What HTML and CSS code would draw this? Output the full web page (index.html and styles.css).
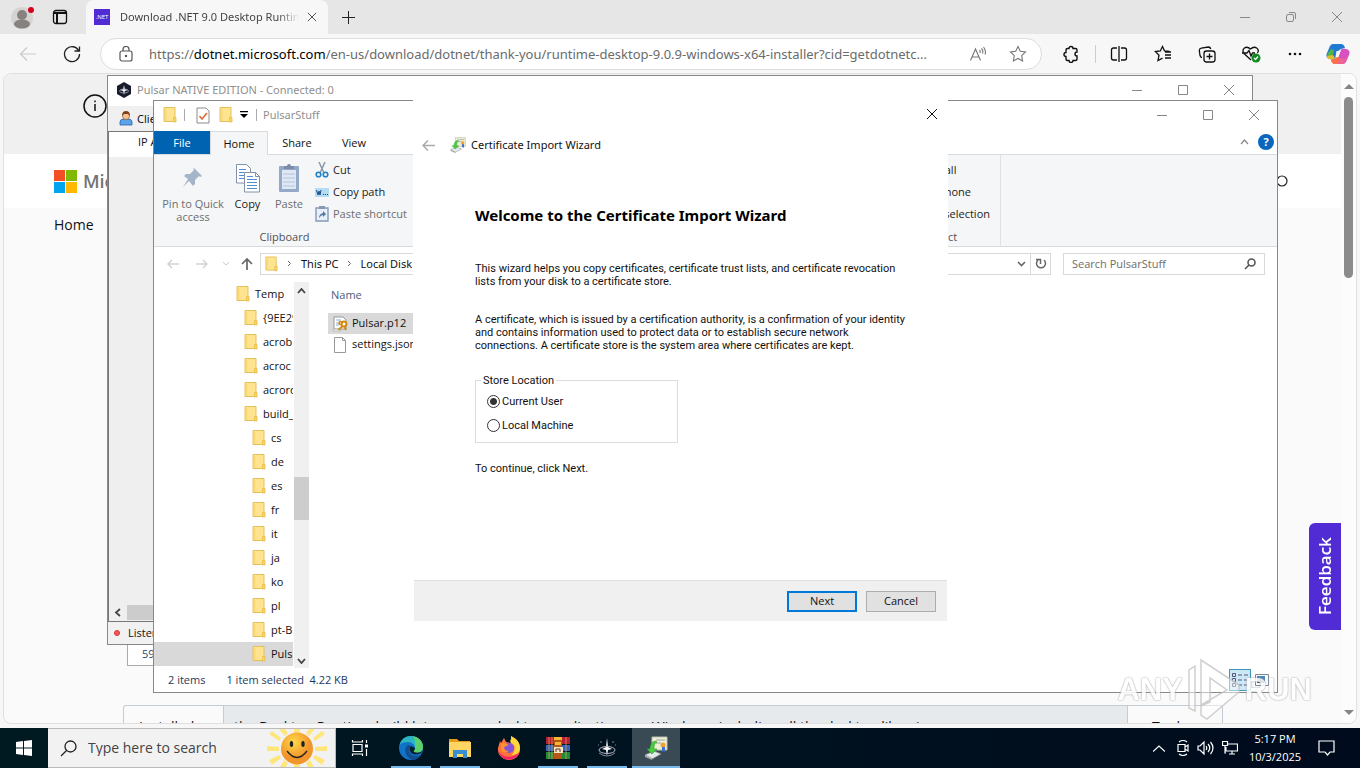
FILE: index.html
```
<!DOCTYPE html>
<html lang="en">
<head>
<meta charset="utf-8">
<title>Desktop</title>
<link rel="stylesheet" href="styles.css">
</head>
<body>
<svg class="defs" aria-hidden="true">
  <symbol id="folder" viewBox="0 0 16 16"><path d="M2 .5h11v14H2z" fill="#ffe490" stroke="#e3c05c"/><path d="M3 2h1.500v12H3z" fill="#fbd976"/><path d="M11.500 10.500h2.500v4.500h-2.500z" fill="#ffd95c" stroke="#e2bb4e" stroke-width=".8"/></symbol>
  <symbol id="min" viewBox="0 0 12 12"><path d="M1 6.500h10"/></symbol>
  <symbol id="max" viewBox="0 0 12 12"><path d="M1.500 1.500h9v9h-9z"/></symbol>
  <symbol id="close" viewBox="0 0 12 12"><path d="M1 1l10 10M11 1L1 11"/></symbol>
  <symbol id="cert" viewBox="0 0 24 24"><path d="M8 1h15v13H8z" fill="#efefd8" stroke="#b9bfae"/><path d="M12 4h9M12 7h5" stroke="#9aa59a"/><circle cx="19" cy="9" r="2.500" fill="#f0a030"/><path d="M18 11h3v5l-2-1-1 1z" fill="#3c6fc8"/><path d="M1 19l9-4 7 3-9 5z" fill="#e6e9eb" stroke="#8e9496" stroke-width=".8"/><path d="M1 19v2l7 3v-2z" fill="#a5abad"/><path d="M11 5c-3 1-5 4-5 8H3l5 5 5-5h-3c0-3 0-5 3-7z" fill="#4ccb45" stroke="#2a9b2a" stroke-width=".6"/></symbol>
  <symbol id="pulsar" viewBox="0 0 16 16"><path d="M8 0l7 4v8l-7 4-7-4V4z" fill="#171b2c"/><path d="M8 3l.8 4L12 8l-3.200 1L8 13l-.8-4L4 8l3.200-1z" fill="#fff"/><ellipse cx="8" cy="9" rx="4.500" ry="2" fill="none" stroke="#a3a7ba" stroke-width=".8"/></symbol>
</svg>

<main class="desktop">
  <section class="browser" aria-label="Browser">
    <header class="tabstrip">
      <button class="profile" aria-label="Profile"><svg width="26" height="26" viewBox="0 0 26 26"><circle cx="12" cy="14" r="11" fill="#d5d4d2"/><circle cx="12" cy="11" r="5" fill="#858280"/><ellipse cx="12" cy="20" rx="8" ry="4.500" fill="#858280"/><circle cx="21" cy="6" r="3" fill="#d6001c"/></svg></button>
      <button class="workspaces" aria-label="Tab actions"><svg width="16" height="16" viewBox="0 0 16 16" fill="none" stroke="#111" stroke-width="1.300"><rect x="1.500" y="1.500" width="13" height="13" rx="2.500"/><path d="M1.500 4h13M5 4v10.500" stroke-width="2"/></svg></button>
      <div class="tab">
        <span class="favicon">.NET</span>
        <span class="tab-title">Download .NET 9.0 Desktop Runtime</span>
        <button class="tab-close" aria-label="Close tab"><svg class="line"><use href="#close"/></svg></button>
      </div>
      <button class="new-tab" aria-label="New tab"><svg width="15" height="15" viewBox="0 0 15 15" stroke="#222"><path d="M7.500 1v13M1 7.500h13"/></svg></button>
      <div class="win-buttons browser-buttons">
        <button aria-label="Minimize"><svg class="line"><use href="#min"/></svg></button>
        <button aria-label="Restore"><svg class="line" viewBox="0 0 12 12"><rect x="1.500" y="3.500" width="7" height="7" rx="1.500"/><path d="M4 1.500h5q1.500 0 1.500 1.500v5"/></svg></button>
        <button aria-label="Close"><svg class="line"><use href="#close"/></svg></button>
      </div>
    </header>
    <nav class="toolbar">
      <button class="t-back" aria-label="Back"><svg width="18" height="16" viewBox="0 0 18 16" fill="none" stroke="#cacaca" stroke-width="1.200"><path d="M17 8H2M8 1.500L1.500 8 8 14.500"/></svg></button>
      <button class="t-reload" aria-label="Reload"><svg width="18" height="18" viewBox="0 0 18 18" fill="none" stroke="#222" stroke-width="1.300"><path d="M15.800 6A7.500 7.500 0 1 0 16.500 9M16.500 1.500V6h-5"/></svg></button>
      <div class="address" role="textbox" aria-label="Address">
        <svg width="14" height="16" viewBox="0 0 14 16" fill="none" stroke="#555" stroke-width="1.200"><rect x="1" y="5" width="12" height="10" rx="2"/><path d="M4 5V3.500a3 3 0 0 1 6 0V5"/><circle cx="7" cy="10" r=".6" fill="#555"/></svg>
        <span class="url">https://<b>dotnet.microsoft.com</b>/en-us/download/dotnet/thank-you/runtime-desktop-9.0.9-windows-x64-installer?cid=getdotnetc...</span>
        <button aria-label="Read aloud"><svg width="18" height="16" viewBox="0 0 18 16" fill="none" stroke="#777" stroke-width="1.100"><path d="M1.500 14.500L6.500 3l5 11.500M3 11h7M10.500 4q1 1 .5 3M12.500 2.500q2 2 1 5M14.500 1q3 3.500 1.500 7.500"/></svg></button>
        <button aria-label="Favorite"><svg width="18" height="18" viewBox="0 0 18 18" fill="none" stroke="#777" stroke-width="1.100"><path d="M9 1.500l2.300 4.800 5.200.7-3.800 3.700.9 5.200L9 13.400l-4.600 2.500.9-5.200L1.500 7l5.200-.7z"/></svg></button>
      </div>
      <div class="tools">
        <button aria-label="Extensions"><svg width="18" height="18" viewBox="0 0 18 18" fill="none" stroke="#111" stroke-width="1.400"><path d="M5.500 3.500H7a2 2 0 1 1 4 0h2.500q1.500 0 1.500 1.500v2a2 2 0 1 0 0 4v3q0 1.500-1.500 1.500H11a2 2 0 0 1-4 0H5.500Q4 15.500 4 14v-2.500a2 2 0 1 1 0-4V5q0-1.500 1.500-1.500z"/></svg></button>
        <i class="tool-sep"></i>
        <button aria-label="Split screen"><svg width="18" height="18" viewBox="0 0 18 18" fill="none" stroke="#111" stroke-width="1.300"><path d="M7 3H3.500q-2 0-2 2v8q0 2 2 2H7M11 3h3.500q2 0 2 2v8q0 2-2 2H11M9 1v16"/></svg></button>
        <button aria-label="Favorites"><svg width="18" height="18" viewBox="0 0 18 18" fill="none" stroke="#111" stroke-width="1.300"><path d="M15.500 6.500l-5-.7L8.500 1.500 6.300 6l-5 .5L5 10.200 4 15.500l4.500-2.300M11 7h6M11 10h6M11 13h6"/></svg></button>
        <button aria-label="Collections"><svg width="18" height="18" viewBox="0 0 18 18" fill="none" stroke="#111" stroke-width="1.300"><rect x="6" y="6" width="11" height="11" rx="2.500"/><path d="M11.500 8.500v6M8.500 11.500h6M4 12.500q-1.500 0-2-2l-.7-5q0-2 2-2.300l7-1.200q2 0 2.500 2"/></svg></button>
        <button aria-label="Browser essentials"><svg width="20" height="18" viewBox="0 0 20 18" fill="none" stroke="#111" stroke-width="1.300"><path d="M10 15L3 8.500C0 4 5 0 9.500 4 14 0 19 4 16.500 8M1 8h5l2-2.500L10 11l1.500-3H14"/><circle cx="15" cy="13" r="4.500" fill="#128a22" stroke="none"/><path d="M13 13l1.500 1.500L17 11.500" stroke="#fff"/></svg></button>
        <button class="more" aria-label="More"><svg width="14" height="4" viewBox="0 0 14 4" fill="#111"><circle cx="2" cy="2" r="1.300"/><circle cx="7" cy="2" r="1.300"/><circle cx="12" cy="2" r="1.300"/></svg></button>
        <button aria-label="Copilot"><svg width="24" height="22" viewBox="0 0 24 22"><path d="M7 1h8q3 0 4 4l-4 1-3 2-3 8q-1 1-5 0-5-1-3-6l3-7q1-2 3-2z" fill="#2079d5"/><path d="M2 10l3-4 3 1-2 8-3 1q-3-2-1-6z" fill="#50b64a"/><path d="M1 13l6-1 2 3-2 2-4-1q-2-1-2-3z" fill="#e5ba2d"/><path d="M17 21H9q-3 0-4-4l4-1 3-2 3-7q1-2 5-1 5 1 3 6l-3 7q-1 2-3 2z" fill="#d851c0"/><path d="M5 17l4-1 3-3 2 3-2 5H9q-3 0-4-4z" fill="#ff7046"/><path d="M13 15l6 1 2-3-2 6-3 2h-4z" fill="#f06493"/><path d="M10.500 8h4l-2 6h-3z" fill="#f7f7f7"/></svg></button>
      </div>
    </nav>
    <div class="page">
      <div class="page-body">
        <div class="banner"><svg width="24" height="24" viewBox="0 0 24 24" fill="none" stroke="#111" stroke-width="1.500"><circle cx="12" cy="12" r="11"/><path d="M12 10v7M12 6.500v1.800"/></svg></div>
        <div class="masthead">
          <a href="#" class="ms"><svg width="23" height="23" viewBox="0 0 23 23"><path d="M0 0h11v11H0z" fill="#f25022"/><path d="M12 0h11v11H12z" fill="#7fba00"/><path d="M0 12h11v11H0z" fill="#00a4ef"/><path d="M12 12h11v11H12z" fill="#ffb900"/></svg>Microsoft</a>
          <button class="site-search" aria-label="Search site"><svg width="14" height="14" viewBox="0 0 14 14" fill="none" stroke="#222" stroke-width="1.200"><circle cx="8" cy="7" r="5"/></svg></button>
        </div>
        <a href="#" class="home-link">Home</a>
        <div class="page-fill"></div>
        <div class="page-box">59</div>
        <div class="page-gap"></div>
        <div class="page-cells"><span>Installed</span><span>the Desktop Runtime build lets you run desktop applications on Windows, including all the desktop libraries</span><span>Tools</span></div>
      </div>
      <div class="page-scroll"><i class="arrow-up"></i><i class="thumb"></i><i class="arrow-down"></i></div>
      <button class="feedback">Feedback</button>
    </div>
  </section>

  <section class="window pulsar" aria-label="Pulsar">
    <header class="titlebar"><svg width="16" height="16"><use href="#pulsar"/></svg><span class="title">Pulsar NATIVE EDITION - Connected: 0</span>
      <div class="win-buttons"><button aria-label="Minimize"><svg class="line"><use href="#min"/></svg></button><button aria-label="Maximize"><svg class="line"><use href="#max"/></svg></button><button aria-label="Close"><svg class="line"><use href="#close"/></svg></button></div>
    </header>
    <div class="menu"><svg width="14" height="15" viewBox="0 0 14 15"><path d="M1 11q0-3 4-3h4q4 0 4 3v3H1z" fill="#5da3ea" stroke="#2464a8" stroke-width=".8"/><circle cx="7" cy="5" r="3.500" fill="#f6c294" stroke="#8b4b20" stroke-width=".6"/><path d="M3 5q0-5 4-5t4 5l-2-2H5z" fill="#81401a"/></svg><button>Clients</button></div>
    <div class="list"><div class="list-head">IP Address</div><div class="list-fill"></div><div class="h-scroll"><svg width="7" height="9" viewBox="0 0 7 9" fill="none" stroke="#444" stroke-width="1.800"><path d="M6 1L2 4.500 6 8"/></svg><i></i></div></div>
    <footer class="pulsar-status"><i></i>Listening</footer>
  </section>

  <section class="window explorer" aria-label="PulsarStuff">
    <header class="titlebar">
      <svg class="q1" width="16" height="18"><use href="#folder"/></svg><i class="q-sep"></i>
      <svg class="q2" width="14" height="17" viewBox="0 0 14 17" fill="#fff" stroke="#8c8c8c"><path d="M1 1h9l3 3v12H1z"/><path d="M3.500 9l2.500 3 5-6" fill="none" stroke="#e06a35" stroke-width="1.600"/></svg>
      <svg class="q3" width="16" height="18"><use href="#folder"/></svg>
      <svg class="q4" width="8" height="8" viewBox="0 0 8 8"><path d="M0 0h8v1.200H0zM0 3h8L4 7z"/></svg><i class="q-sep"></i>
      <span class="title">PulsarStuff</span>
      <div class="win-buttons"><button aria-label="Minimize"><svg class="line"><use href="#min"/></svg></button><button aria-label="Maximize"><svg class="line"><use href="#max"/></svg></button><button aria-label="Close"><svg class="line"><use href="#close"/></svg></button></div>
    </header>
    <nav class="ribbon-tabs"><button class="file">File</button><button class="active">Home</button><button>Share</button><button>View</button>
      <div class="ribbon-end"><svg width="9" height="6" viewBox="0 0 9 6" fill="none" stroke="#888" stroke-width="1.200"><path d="M1 5l3.500-4L8 5"/></svg><button class="help" aria-label="Help">?</button></div>
    </nav>
    <div class="ribbon">
      <div class="group clipboard">
        <div class="group-main">
          <button class="big pin"><svg width="24" height="30" viewBox="0 0 24 30"><path d="M13 5l8 8-2 1-1-1-4 4v4l-2 2-4-5-6 6 5-8-4-3 2-2h4l4-4-1-1z" fill="#a4b5ca"/></svg>Pin to Quick access</button>
          <button class="big copy"><svg width="26" height="30" viewBox="0 0 26 30"><g fill="#fff" stroke="#8092a8"><path d="M1.500 1.500h10l4 4V20h-14z"/><path d="M9.500 9.500h11l4 4V29h-15z"/></g><path d="M4 6.500h7M4 9.500h5M4 12.500h5M4 15.500h5M12 16.500h10M12 19.500h10M12 22.500h10M12 25.500h10M12 13.500h6" stroke="#4e8fd6"/><path d="M20.500 9.500v4h4" fill="none" stroke="#8092a8"/></svg>Copy</button>
          <button class="big paste"><svg width="22" height="30" viewBox="0 0 22 30"><rect x="1" y="3" width="20" height="26" rx="1" fill="#93a9c7"/><path d="M4 7h14v19H4z" fill="#dfe8f4"/><path d="M6 3h3q0-2 2-2t2 2h3v3H6z" fill="#7c8ca5"/><path d="M5 11h12M5 15h12M5 19h12M5 23h12" stroke="#b3c4db"/></svg>Paste</button>
          <div class="small-tools">
            <button><svg width="14" height="16" viewBox="0 0 14 16" fill="none"><path d="M4 0l5 11M10 0L5 11" stroke="#8a98a8" stroke-width="1.500"/><circle cx="3.500" cy="12.500" r="2.300" stroke="#2080c8" stroke-width="1.600"/><circle cx="10.500" cy="12.500" r="2.300" stroke="#2080c8" stroke-width="1.600"/></svg>Cut</button>
            <button><svg width="14" height="9" viewBox="0 0 14 9"><path d="M0 0h14v9H0z" fill="#b5dbf5"/><path d="M1.500 2l1.500 5 1-4 1 4 1-5M8 6.500h1M10 6.500h1M12 6.500h1" stroke="#194c80" fill="none"/></svg>Copy path</button>
            <button class="dim"><svg width="14" height="16" viewBox="0 0 14 16"><path d="M1 2h12v13H1z" fill="#e9eff8" stroke="#849bb9" stroke-width="1.400"/><path d="M4 0h6v3H4z" fill="#8799b1"/><path d="M4 12q0-4 4-5V5l3 3-3 3V9q-2 0-4 3" fill="#53779f"/></svg>Paste shortcut</button>
          </div>
        </div>
        <span class="group-label">Clipboard</span>
      </div>
      <div class="group select"><div class="small-tools"><button>Select all</button><button>Select none</button><button>Invert selection</button></div><span class="group-label">Select</span></div>
    </div>
    <div class="nav-row">
      <button class="n1" aria-label="Back"><svg width="12" height="10" viewBox="0 0 12 10" fill="none" stroke="#d3d3d3" stroke-width="1.500"><path d="M12 5H1M5 1L1 5l4 4"/></svg></button>
      <button class="n2" aria-label="Forward"><svg width="12" height="10" viewBox="0 0 12 10" fill="none" stroke="#d3d3d3" stroke-width="1.500"><path d="M0 5h11M7 1l4 4-4 4"/></svg></button>
      <button class="n3" aria-label="Recent"><svg width="6" height="4" viewBox="0 0 6 4" fill="none" stroke="#ccc"><path d="M0 0l3 3 3-3"/></svg></button>
      <button class="n4" aria-label="Up"><svg width="12" height="12" viewBox="0 0 12 12" fill="none" stroke="#666" stroke-width="1.700"><path d="M6 12V1M1 6l5-5 5 5"/></svg></button>
      <div class="crumbs"><svg width="15" height="16"><use href="#folder"/></svg><svg class="chev" viewBox="0 0 5 7"><path d="M1 1l2.500 2.500L1 6"/></svg><button>This PC</button><svg class="chev" viewBox="0 0 5 7"><path d="M1 1l2.500 2.500L1 6"/></svg><button>Local Disk (C:)</button>
        <svg class="crumb-drop" width="9" height="6" viewBox="0 0 9 6" fill="none" stroke="#666" stroke-width="1.600"><path d="M1 1l3.500 3.500L8 1"/></svg>
        <button class="refresh" aria-label="Refresh"><svg width="12" height="13" viewBox="0 0 12 13" fill="none" stroke="#666" stroke-width="1.500"><path d="M9 3a4.500 4.500 0 1 1-6 0M1 2.500h4.500V7"/></svg></button></div>
      <label class="find"><input type="text" placeholder="Search PulsarStuff" aria-label="Search PulsarStuff"><svg width="12" height="12" viewBox="0 0 12 12" fill="none" stroke="#555" stroke-width="1.600"><circle cx="7.500" cy="4.500" r="3.500"/><path d="M5 7L1 11"/></svg></label>
    </div>
    <div class="panes">
      <ul class="tree">
        <li><svg><use href="#folder"/></svg>Temp</li>
        <li class="l1"><svg><use href="#folder"/></svg>{9EE29</li>
        <li class="l1"><svg><use href="#folder"/></svg>acrob</li>
        <li class="l1"><svg><use href="#folder"/></svg>acroc</li>
        <li class="l1"><svg><use href="#folder"/></svg>acrord</li>
        <li class="l1"><svg><use href="#folder"/></svg>build_</li>
        <li class="l2"><svg><use href="#folder"/></svg>cs</li>
        <li class="l2"><svg><use href="#folder"/></svg>de</li>
        <li class="l2"><svg><use href="#folder"/></svg>es</li>
        <li class="l2"><svg><use href="#folder"/></svg>fr</li>
        <li class="l2"><svg><use href="#folder"/></svg>it</li>
        <li class="l2"><svg><use href="#folder"/></svg>ja</li>
        <li class="l2"><svg><use href="#folder"/></svg>ko</li>
        <li class="l2"><svg><use href="#folder"/></svg>pl</li>
        <li class="l2"><svg><use href="#folder"/></svg>pt-B</li>
        <li class="l2 current"><svg><use href="#folder"/></svg>Puls</li>
      </ul>
      <div class="v-scroll"><svg width="9" height="6" viewBox="0 0 9 6" fill="none" stroke="#444" stroke-width="1.800"><path d="M1 5l3.500-4L8 5"/></svg><i></i><svg width="9" height="6" viewBox="0 0 9 6" fill="none" stroke="#444" stroke-width="1.800"><path d="M1 1l3.500 4L8 1"/></svg></div>
      <table class="files">
        <thead><tr><th>Name</th></tr></thead>
        <tbody>
          <tr class="sel"><td><svg width="16" height="16" viewBox="0 0 16 16"><path d="M2 1h9l3 3v9H2z" fill="#fff" stroke="#999"/><path d="M4 4h5M4 7h4M4 9h3" stroke="#8fb0d0"/><path d="M1 13h8v2H1z" fill="#e6e6dc" stroke="#aaa" stroke-width=".5"/><circle cx="12" cy="8" r="2.500" fill="none" stroke="#d28a10" stroke-width="1.800"/><circle cx="8.500" cy="7" r="1.500" fill="none" stroke="#d28a10" stroke-width="1.500"/><path d="M10.500 10l-4 4M12 10l2 4" stroke="#d28a10" stroke-width="1.800"/></svg>Pulsar.p12</td></tr>
          <tr><td><svg width="16" height="16" viewBox="0 0 16 16"><path d="M2.500.5h8l3 3v12h-11z" fill="#fff" stroke="#999"/><path d="M10.500.5v3h3" fill="none" stroke="#999"/></svg>settings.json</td></tr>
        </tbody>
      </table>
    </div>
    <footer class="explorer-status"><span>2 items</span><span>1 item selected&ensp;4.22 KB</span>
      <div class="views"><button class="on" aria-label="Details view"><svg width="16" height="14" viewBox="0 0 16 14" fill="none" stroke="#557"><path d="M.5.500h3v3h-3zM.5 5.500h3v3h-3zM.5 10.500h3v3h-3zM6 2h4M12 2h4M6 7h4M12 7h4M6 12h4M12 12h4"/></svg></button><button aria-label="Icon view"><svg width="14" height="12" viewBox="0 0 14 12"><path d="M.5.500h13v11H.5z" fill="#fff" stroke="#789"/><path d="M2 2h8v7H2z" fill="#4b86ba"/><path d="M2 9l4-4 4 4z" fill="#163854"/></svg></button></div>
    </footer>
  </section>

  <section class="wizard" role="dialog" aria-label="Certificate Import Wizard">
    <header class="wizard-top"><button aria-label="Close"><svg class="line"><use href="#close"/></svg></button></header>
    <div class="wizard-title"><button aria-label="Back"><svg width="13" height="11" viewBox="0 0 13 11" fill="none" stroke="#aaa" stroke-width="1.500"><path d="M13 5.500H1M6 .5l-5 5 5 5"/></svg></button><svg width="16" height="16"><use href="#cert"/></svg><span>Certificate Import Wizard</span></div>
    <form class="wizard-body">
      <h1>Welcome to the Certificate Import Wizard</h1>
      <p>This wizard helps you copy certificates, certificate trust lists, and certificate revocation<br>lists from your disk to a certificate store.</p>
      <p class="about">A certificate, which is issued by a certification authority, is a confirmation of your identity<br>and contains information used to protect data or to establish secure network<br>connections. A certificate store is the system area where certificates are kept.</p>
      <fieldset><legend>Store Location</legend>
        <label><input type="radio" name="store" checked>Current User</label>
        <label><input type="radio" name="store">Local Machine</label>
      </fieldset>
      <p>To continue, click Next.</p>
    </form>
    <footer class="wizard-foot"><button class="primary">Next</button><button>Cancel</button></footer>
  </section>

  <div class="watermark"><span>ANY</span><svg width="54" height="64" viewBox="0 0 54 64" fill="#fff" fill-opacity=".55" stroke="#c8c8c8" stroke-width="1.500"><path d="M8 8L2 12v38l6 3zM14 2v46l9-4V20l17 12-26 15v10l6 4 32-27v-7z"/></svg><span>RUN</span></div>
</main>

<footer class="taskbar">
  <button class="start" aria-label="Start"><svg width="16" height="16" viewBox="0 0 16 16" fill="#fff"><path d="M0 2l7-1v6.500H0zM8 1l8-1v7.500H8zM0 8.500h7V15l-7-1zM8 8.500h8V16l-8-1z"/></svg></button>
  <label class="search"><svg width="17" height="17" viewBox="0 0 17 17" fill="none" stroke="#222" stroke-width="1.300"><circle cx="10.500" cy="6.500" r="5.500"/><path d="M6.500 10.500L1 16"/></svg><input type="text" placeholder="Type here to search" aria-label="Type here to search">
    <svg width="60" height="38" viewBox="0 0 60 38"><defs><radialGradient id="sun" cx=".4" cy=".3"><stop offset="0" stop-color="#ffd84a"/><stop offset="1" stop-color="#f2952b"/></radialGradient></defs><g fill="#ffe67b"><path d="M27 0h6v4h-6zM27 35h6v3h-6zM12 0h6l3 4-3 3zM42 0h6l-6 7-3-3zM2 5l3-3 9 7-2 3zM58 5l-3-3-9 7 2 3zM0 17l12 1v4L0 22zM60 17l-12 1v4l12 0zM2 31l10-5 2 3-9 7zM58 31l-10-5-2 3 9 7zM17 31l4 3-2 4h-6zM43 31l-4 3 2 4h6z"/></g><circle cx="30" cy="19.500" r="16" fill="url(#sun)"/><ellipse cx="24.500" cy="15" rx="1.700" ry="3" fill="#222"/><ellipse cx="36" cy="15" rx="1.700" ry="3" fill="#222"/><path d="M20 22q10 13 20 0" fill="none" stroke="#222" stroke-width="1.300"/></svg></label>
  <div class="apps">
    <button class="task-view" aria-label="Task view"><svg width="18" height="16" viewBox="0 0 18 16" fill="none" stroke="#fff" stroke-width="1.200"><path d="M2 4.500h9v7H2zM1.500 0v2h10V0M1.500 16v-2h10v2M15.500 0v3M15.500 9v7"/><path d="M14 4.500h3v3h-3z" fill="#fff" stroke="none"/></svg></button>
    <button class="open" aria-label="Edge"><svg width="24" height="24" viewBox="0 0 24 24"><circle cx="12" cy="12" r="12" fill="#1173c8"/><path d="M.5 9Q3 0 12 0c7 0 12 5 12 11 0 5-5 7-9 5-1-1 1-2 1-4 0-3-3-6-7-6-4 0-7 1-8.500 3z" fill="#2bb5c0"/><path d="M14 .2C20 1 24 6 24 11c0 5-5 7-9 5-1-1 1-2 1-4 0-5 1-7-2-11.800z" fill="#5bd06d"/><path d="M9 9c-5 3-3 12 4 15 4 0 7-2 9-5-6 2-12 0-12-5 0-2 1-3 2-4z" fill="#114e91"/><path d="M12 10c-2 2-2 6 2 8 3 1 6 0 8-1l1-2c-2 2-6 2-8 1-1-1 1-2 1-4z" fill="#03202c"/></svg></button>
    <button class="open" aria-label="File Explorer"><svg width="22" height="20" viewBox="0 0 22 20"><path d="M0 1h8l2 2h11v6H0z" fill="#e69b1b"/><path d="M0 4h22v15H0z" fill="#ffd564"/><path d="M4 20v-8h14v8h-4v-4H8v4z" fill="#388fd0"/></svg></button>
    <button aria-label="Firefox"><svg width="24" height="24" viewBox="0 0 24 24"><path d="M3 5l1 2 3-5 2 4 5 1 0-7c7 3 9 8 9 13 0 7-5 11-11 11S0 19 1 12z" fill="#ff713b"/><path d="M14 0c1 4-2 4 0 7 5 1 5 9 0 12 5 0 9-2 9-7 0-6-4-9-6-10z" fill="#ffd93c"/><path d="M1 12c1 9 12 12 21 5-3 9-20 10-21-5z" fill="#f22469"/><circle cx="12" cy="12" r="5" fill="#8353db"/><path d="M4 7q5 0 8 2l-5 2q0 4 5 4-6 4-8-2z" fill="#ff922d"/></svg></button>
    <button class="open" aria-label="WinRAR"><svg width="24" height="24" viewBox="0 0 24 24"><path d="M0 1h24v7H0z" fill="#b92035"/><path d="M0 9h24v6H0z" fill="#3464b8"/><path d="M0 16h24v7H0z" fill="#248839"/><path d="M3 1v22M6 1v22M20 1v22" stroke="#ddb05a" stroke-width=".7"/><path d="M8 1h8v22H8z" fill="#b65617"/><path d="M8 1h8v3H8zM9 6h6v3H9z" fill="#f4b633"/><path d="M8 11h9v6H8z" fill="#f3e4c4"/><path d="M10 16v-3h4v3" fill="none" stroke="#663a22"/></svg></button>
    <button class="open" aria-label="Pulsar"><svg width="22" height="22" viewBox="0 0 22 22" fill="none" stroke="#b7b6c6"><path d="M11 1l1 9 4 2-4 1-1 6-1-6-4-1 4-2z" fill="#fff" stroke="none"/><ellipse cx="11" cy="13" rx="8" ry="3.500"/><path d="M3 16q8 6 16 0M5 4v2M17 4v2M2 8h1M19 8h1" opacity=".7"/></svg></button>
    <button class="open focused" aria-label="Certificate Import Wizard"><svg width="24" height="24"><use href="#cert"/></svg></button>
  </div>
  <div class="tray">
    <svg width="12" height="7" viewBox="0 0 12 7"><path d="M0 6.500l6-5.500 6 5.500"/></svg>
    <svg width="12" height="16" viewBox="0 0 12 16"><path d="M1 4.500h7v7H1zM8 7l3-2v6L8 9M2 2q4-3 8 0M2 14q4 3 8 0"/></svg>
    <svg width="17" height="14" viewBox="0 0 17 14"><path d="M1 5h2l4-4v12L3 9H1zM9 5q1.500 2 0 4M11 3q3.500 4 0 8M13.500 1q5 6 0 12"/></svg>
    <svg width="16" height="14" viewBox="0 0 16 14"><path d="M6 3h9.500v7H4V6M7 13h6M10 10v3M.5.500h5v4h-5zM3 4.500V12h1"/></svg>
    <button class="clock">5:17 PM<br>10/3/2025</button>
    <button class="notes" aria-label="Notifications"><svg width="17" height="16" viewBox="0 0 17 16"><path d="M1 1h15v11h-4l-2.500 3L7 12H1z"/></svg></button>
  </div>
</footer>
</body>
</html>
```
FILE: styles.css
```
* { box-sizing: border-box; }
body { margin: 0; height: 100vh; min-height: 720px; display: flex; flex-direction: column; overflow: hidden; font: 11px/16px "Open Sans", "Noto Sans", sans-serif; color: #111; }
button { border: 0; padding: 0; background: none; font: inherit; color: inherit; display: flex; align-items: center; justify-content: center; white-space: nowrap; }
input { font: inherit; }
svg { flex: none; display: block; }
a { color: inherit; text-decoration: none; }
.defs { position: absolute; width: 0; height: 0; }
.line { width: 12px; height: 12px; fill: none; stroke: #888; stroke-width: 1; }
.desktop { position: relative; flex: 1; min-height: 0; display: flex; overflow: hidden; }
.tab-title, .url, .titlebar, .menu, .crumbs, .wizard-title { font-family: "Noto Sans", "Open Sans", sans-serif; }

/* Browser */
.browser { flex: 1; min-width: 0; display: flex; flex-direction: column; background: #f7f7f7; }
.tabstrip { height: 34px; display: flex; align-items: center; background: #e6e6e6; }
.profile { width: 46px; }
.workspaces { width: 28px; }
.tab { width: 242px; height: 34px; margin-left: 12px; padding: 0 10px 0 8px; display: flex; align-items: center; background: #f7f7f7; border-radius: 8px 8px 0 0; }
.favicon { width: 16px; height: 16px; background: #512bd4; color: #fff; font-size: 6px; line-height: 16px; text-align: center; }
.tab-title { flex: 1; margin-left: 10px; overflow: hidden; white-space: nowrap; color: #444; mask-image: linear-gradient(90deg, #000 88%, transparent); }
.tab-close { width: 12px; margin-left: 7px; }
.tab-close .line { width: 10px; height: 10px; stroke: #333; }
.new-tab { width: 40px; height: 34px; }
.win-buttons { margin-left: auto; display: flex; }
.win-buttons button { width: 46px; height: 30px; }
.toolbar { height: 39px; display: flex; align-items: center; padding-right: 10px; }
.t-back { width: 56px; }
.t-reload { width: 32px; }
.address { flex: 1; min-width: 0; height: 32px; margin-left: 12px; padding: 0 14px 0 18px; display: flex; align-items: center; background: #fff; border: 1px solid #ddd; border-radius: 16px; }
.url { flex: 1; min-width: 0; margin: 0 22px 0 16px; overflow: hidden; white-space: nowrap; font-size: 13px; line-height: 20px; color: #6b6b6b; }
.url b { font-weight: 400; color: #000; }
.address button + button { margin-left: 22px; }
.tools { display: flex; align-items: center; margin-left: 18px; }
.tools button { width: 22px; margin-right: 22px; }
.tools button:last-child { width: 24px; margin-right: 0; }
.tools .more { margin-right: 20px; }
.tool-sep { width: 1px; height: 18px; margin: 0 12px 0 -9px; background: #ccc; }
.page { position: relative; flex: 1; min-height: 0; margin: 0 3px 4px; display: flex; border: 1px solid #e0e0e0; border-radius: 8px; overflow: hidden; background: #fafafa; }
.page-body { flex: 1; min-width: 0; display: flex; flex-direction: column; }
.banner { height: 80px; padding: 20px 0 0 79px; background: #f0f0f0; }
.masthead { height: 54px; padding: 0 53px 0 50px; display: flex; align-items: center; justify-content: space-between; background: #fff; }
.ms { display: flex; align-items: center; gap: 6px; font-size: 18px; font-weight: 600; line-height: 24px; color: #737373; }
.home-link { margin: 7px 0 0 50px; font-size: 14px; line-height: 20px; }
.page-fill { flex: 1; }
.page-box { width: 900px; height: 24px; margin-left: 123px; padding-left: 14px; line-height: 22px; color: #274867; background: #fff; border: 1px solid #aaa; }
.page-gap { height: 39px; }
.page-cells { height: 18px; margin: 0 118px 0 119px; display: flex; border: 1px solid #c4cbd2; border-bottom: 0; border-radius: 3px 3px 0 0; overflow: hidden; font-size: 14px; line-height: 42px; white-space: nowrap; }
.page-cells span { width: 100px; height: 42px; padding-left: 15px; border-right: 1px solid #c4cbd2; }
.page-cells span:nth-child(2) { flex: 1; padding-left: 10px; background: #e6eaed; }
.page-cells span:last-child { width: 94px; padding-left: 24px; border-right: 0; }
.page-scroll { width: 15px; display: flex; flex-direction: column; align-items: center; background: #fcfcfc; padding: 10px 0 8px; }
.arrow-up { border: 5px solid transparent; border-top: 0; border-bottom-color: #858585; }
.arrow-down { margin-top: auto; border: 5px solid transparent; border-bottom: 0; border-top-color: #858585; }
.thumb { width: 9px; height: 181px; margin-top: 8px; border-radius: 5px; background: #8b8b8b; }
.feedback { position: absolute; right: 15px; top: 449px; width: 32px; height: 107px; writing-mode: vertical-rl; transform: rotate(180deg); background: #512bd4; color: #fff; font-size: 17px; font-weight: 600; border-radius: 0 6px 6px 0; }

/* Windows */
.window { position: absolute; display: flex; flex-direction: column; background: #fff; border: 1px solid #888; }
.titlebar { height: 30px; flex: none; display: flex; align-items: center; padding-bottom: 2px; color: #8f8f8f; }
.pulsar { left: 107px; top: 75px; width: 1146px; height: 570px; }
.pulsar .titlebar { padding-left: 8px; }
.pulsar .title { margin-left: 5px; }
.menu { height: 25px; flex: none; display: flex; align-items: center; gap: 4px; padding-left: 11px; background: #f0f0f0; }
.list { flex: 1; display: flex; flex-direction: column; border: 1px solid #777; border-right: 0; background: #efefef; }
.list-head { height: 25px; line-height: 20px; padding-left: 29px; background: #fff; }
.list-fill { flex: 1; }
.h-scroll { display: flex; height: 17px; align-items: center; padding-left: 5px; }
.h-scroll i { width: 900px; height: 15px; margin-left: 6px; background: #ccc; }
.pulsar-status { height: 22px; display: flex; align-items: center; gap: 8px; padding-left: 6px; background: #f1f1f1; }
.pulsar-status i { width: 6px; height: 6px; border-radius: 3px; background: #ef5c5c; border: 1px solid #d33; }

.explorer { left: 153px; top: 100px; width: 1125px; height: 593px; }
.explorer .titlebar { padding-left: 8px; }
.q-sep { width: 1px; height: 12px; background: #aaa; }
.q1 { margin-right: 6px; }
.q2 { margin: 0 8px 0 11px; }
.q3 { margin-right: 6px; }
.q4 { margin-right: 8px; }
.explorer .title { margin-left: 6px; }
.ribbon-tabs { height: 24px; flex: none; display: flex; border-bottom: 1px solid #dadbdc; }
.ribbon-tabs > button { width: 56px; height: 23px; }
.ribbon-tabs > .file { background: #0063b1; color: #fff; }
.ribbon-tabs > .active { width: 58px; height: 24px; background: #f5f6f7; border: 1px solid #dadbdc; border-bottom: 0; }
.ribbon-tabs > .active + button { width: 58px; }
.ribbon-end { margin-left: auto; display: flex; align-items: center; gap: 9px; padding: 0 3px 2px 0; }
.help { width: 16px; height: 16px; border-radius: 8px; background: #0b66bd; color: #fff; font-weight: 700; }
.ribbon { height: 92px; flex: none; display: flex; justify-content: space-between; padding-right: 276px; background: #f5f6f7; border-bottom: 1px solid #dadbdc; }
.group { display: flex; flex-direction: column; }
.group-main { display: flex; }
.clipboard { width: 261px; }
.group-label { margin-top: auto; padding-bottom: 1px; text-align: center; color: #4f5357; }
.big { flex-direction: column; justify-content: flex-start; padding-top: 8px; gap: 4px; line-height: 13px; white-space: normal; color: #6d6d6d; }
.big.pin { width: 78px; }
.big.copy { width: 31px; color: #222; }
.big.paste { width: 52px; }
.small-tools { display: flex; flex-direction: column; padding-top: 4px; }
.small-tools button { height: 22px; gap: 4px; justify-content: flex-start; color: #222; }
.small-tools .dim { color: #6d6d6d; }
.select { width: 117px; border-right: 1px solid #e0e1e2; }
.select .small-tools { align-self: flex-end; padding-right: 10px; }
.nav-row { height: 35px; flex: none; display: flex; align-items: center; padding: 0 12px 2px 0; }
.n1 { width: 38px; }
.n2 { width: 20px; }
.n3 { width: 28px; }
.n4 { width: 14px; }
.crumbs { flex: 1; height: 22px; margin-left: 6px; padding-left: 3px; display: flex; align-items: center; border: 1px solid #d9d9d9; }
.chev { width: 5px; height: 7px; margin: 0 9px 0 8px; fill: none; stroke: #666; }
.crumb-drop { margin-left: auto; }
.refresh { width: 20px; height: 20px; margin-left: 4px; border-left: 1px solid #d9d9d9; }
.find { width: 202px; height: 22px; margin-left: 12px; padding: 0 8px; display: flex; align-items: center; border: 1px solid #d9d9d9; }
.find input { flex: 1; min-width: 0; border: 0; padding: 0; background: none; outline: 0; }
.find input::placeholder { color: #6d6d6d; opacity: 1; }
.panes { flex: 1; min-height: 0; display: flex; }
.tree { width: 139px; margin: 0 1px 0 0; padding: 0; list-style: none; overflow: hidden; }
.tree li { height: 24px; padding-left: 81px; display: flex; align-items: center; gap: 4px; white-space: nowrap; }
.tree svg { width: 16px; height: 16px; }
.tree .l1 { padding-left: 89px; }
.tree .l2 { padding-left: 97px; }
.tree .current { background: #d9d9d9; }
.v-scroll { width: 15px; display: flex; flex-direction: column; align-items: center; padding: 6px 0 4px; background: #f0f0f0; }
.v-scroll i { width: 15px; height: 43px; margin: 183px 0 auto; background: #cdcdcd; }
.files { width: 400px; align-self: flex-start; margin-left: 19px; border-collapse: collapse; }
.files th { height: 31px; padding: 0 3px 6px; font-weight: 400; text-align: left; color: #4c607a; }
.files td { height: 21px; padding: 0 4px; vertical-align: middle; }
.files td svg { display: inline-block; vertical-align: middle; margin-right: 4px; }
.files .sel { background: #d9d9d9; }
.explorer-status { height: 24px; flex: none; display: flex; align-items: center; gap: 21px; padding: 0 4px 0 14px; color: #1e395b; }
.views { margin-left: auto; display: flex; }
.views button { width: 22px; height: 22px; }
.views .on { background: #cce8f6; border: 1px solid #3b97b8; }

/* Wizard */
.wizard { position: absolute; left: 413px; top: 99px; width: 535px; height: 522px; display: flex; flex-direction: column; background: #fff; }
.wizard-top { height: 30px; flex: none; display: flex; justify-content: flex-end; padding-right: 10px; }
.wizard-top .line { stroke: #111; }
.wizard-title { height: 32px; flex: none; display: flex; align-items: center; padding-left: 9px; }
.wizard-title svg { margin-right: 5px; }
.wizard-title button { margin-right: 10px; }
.wizard-body { flex: 1; padding: 43px 40px 0 62px; font: 11px/13px Roboto, "Open Sans", sans-serif; }
.wizard-body h1 { margin: 0 0 36px; font: 700 15px/22px "Noto Sans", "Open Sans", sans-serif; color: #000; white-space: nowrap; }
.wizard-body p { margin: 0 0 25px; white-space: nowrap; }
.wizard-body .about { margin-bottom: 22px; }
.wizard-body fieldset { width: 203px; height: 69px; margin: 0 0 19px; padding: 6px 10px 0; border: 1px solid #dcdcdc; }
.wizard-body legend { padding: 0 2px; margin-left: -5px; }
.wizard-body label { display: flex; align-items: center; height: 16px; margin-bottom: 8px; gap: 2px; }
.wizard-body input { appearance: none; width: 13px; height: 13px; margin: 0 0 0 1px; border: 1px solid #333; border-radius: 50%; background: #fff; }
.wizard-body input:checked { background: radial-gradient(circle, #333 3px, #fff 4px); }
.wizard-foot { height: 41px; flex: none; margin: 0 1px; padding: 0 11px; display: flex; align-items: center; justify-content: flex-end; gap: 9px; background: #f0f0f0; border-top: 1px solid #dfdfdf; }
.wizard-foot button { width: 70px; height: 21px; background: #e1e1e1; border: 1px solid #adadad; }
.wizard-foot button { font: 11px/16px "Open Sans", "Noto Sans", sans-serif; }
.wizard-foot .primary { border: 2px solid #0078d7; }

.watermark { position: absolute; right: 48px; bottom: 6px; display: flex; align-items: center; gap: 4px; opacity: .85; font: 700 31px/40px "Liberation Sans", sans-serif; color: #fff; text-shadow: 0 0 2px #999, 0 0 1px #aaa; pointer-events: none; }

/* Taskbar */
.taskbar { height: 40px; flex: none; display: flex; background: linear-gradient(90deg, #001a22, #000b1d); color: #fff; }
.start { width: 48px; }
.search { width: 288px; padding: 0 8px 0 12px; display: flex; align-items: center; background: #f2f2f2; border: 1px solid #bbb; border-left: 0; color: #333; }
.search input { flex: 1; min-width: 0; margin-left: 11px; padding: 0; border: 0; background: none; outline: 0; font-size: 14px; }
.search input::placeholder { color: #444; opacity: 1; }
.apps { display: flex; gap: 1px; }
.apps button { width: 48px; height: 40px; border: solid transparent; border-width: 0 4px; }
.apps .task-view { margin-right: 2px; }
.apps .open { background: linear-gradient(#76b9ed, #76b9ed) bottom / 100% 2px no-repeat padding-box; }
.apps .focused { background: linear-gradient(#76b9ed, #76b9ed) bottom / 100% 2px no-repeat, #3a4a54; border: 0; }
.tray { margin-left: auto; display: flex; align-items: center; gap: 8px; }
.tray svg { fill: none; stroke: #fff; stroke-width: 1.200; }
.tray svg:first-child { margin-right: 4px; }
.clock { width: 58px; line-height: 18px; }
.notes { width: 54px; margin-left: -6px; padding-right: 10px; }
```
